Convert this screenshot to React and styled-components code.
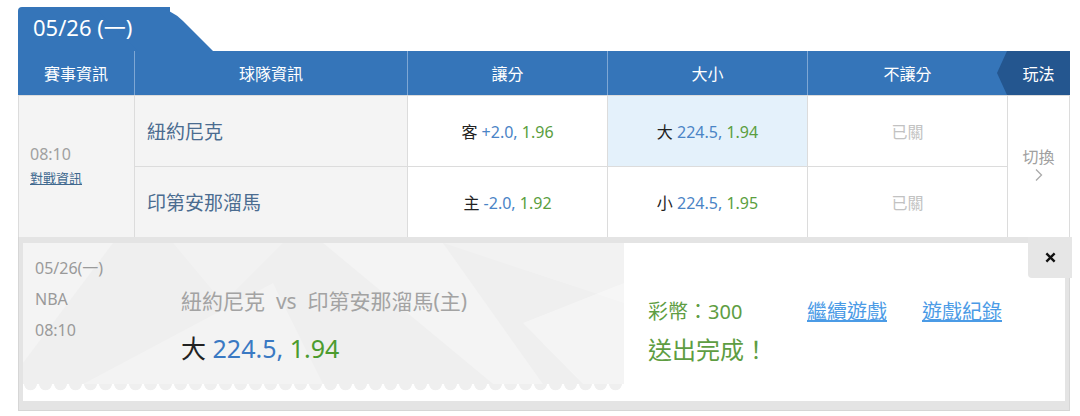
import styled, { createGlobalStyle, css } from "styled-components";

const GlobalStyle = createGlobalStyle`
  body {
    margin: 0;
    background: #fff;
    font-family: "Noto Sans", "Noto Sans CJK TC", sans-serif;
  }
`;

const rows = [
  { team: "紐約尼克", side: "客", spread: "+2.0", spreadOdds: "1.96", ou: "大", total: "224.5", ouOdds: "1.94", picked: true },
  { team: "印第安那溜馬", side: "主", spread: "-2.0", spreadOdds: "1.92", ou: "小", total: "224.5", ouOdds: "1.95" },
];

const App = () => {
  return (
    <>
      <GlobalStyle />
      <Wrap>
        <Tab>
          <TabLabel>05/26 (一)</TabLabel>
        </Tab>
        <HeadRow>
          <HeadCell>賽事資訊</HeadCell>
          <HeadCell>球隊資訊</HeadCell>
          <HeadCell>讓分</HeadCell>
          <HeadCell>大小</HeadCell>
          <HeadCell>不讓分</HeadCell>
          <HeadCell $dark>玩法</HeadCell>
        </HeadRow>

        <Body>
          <InfoCell>
            <Time>08:10</Time>
            <MatchLink>對戰資訊</MatchLink>
          </InfoCell>
          {rows.map((r, i) => (
            <Row key={r.team} $row={i + 1}>
              <TeamCell>{r.team}</TeamCell>
              <OddsCell>
                <span>
                  <Label>{r.side}</Label> <Blue>{r.spread},</Blue> <Green>{r.spreadOdds}</Green>
                </span>
              </OddsCell>
              <OddsCell $picked={r.picked}>
                <span>
                  <Label>{r.ou}</Label> <Blue>{r.total},</Blue> <Green>{r.ouOdds}</Green>
                </span>
              </OddsCell>
              <ClosedCell>已關</ClosedCell>
            </Row>
          ))}
          <SwitchCell>
            <span>切換</span>
            <Chevron viewBox="0 0 10 14">
              <path d="M2 1.5 L7.5 7 L2 12.5" fill="none" stroke="#aaa" strokeWidth="1.3" />
            </Chevron>
          </SwitchCell>
        </Body>

        <Panel>
          <Card>
            <Ticket>
              <Facets viewBox="0 0 601 141" preserveAspectRatio="none">
                <polygon points="0,0 90,0 0,120" fill="#fff" opacity="0.3" />
                <polygon points="60,141 250,40 300,141" fill="#fff" opacity="0.25" />
                <polygon points="300,0 420,0 520,141 470,141" fill="#fff" opacity="0.3" />
                <polygon points="420,0 601,0 601,60" fill="#fff" opacity="0.2" />
                <polygon points="500,80 601,40 601,141 560,141" fill="#fff" opacity="0.35" />
                <polygon points="150,0 260,0 200,60" fill="#fff" opacity="0.2" />
              </Facets>
              <Meta>
                <div>05/26(一)</div>
                <div>NBA</div>
                <div>08:10</div>
              </Meta>
              <Bet>
                <Matchup>紐約尼克&nbsp; vs &nbsp;印第安那溜馬(主)</Matchup>
                <Pick>
                  <Label>大</Label> <BigBlue>224.5,</BigBlue> <BigGreen>1.94</BigGreen>
                </Pick>
              </Bet>
            </Ticket>
            <Result>
              <ResultRow>
                <Coins>彩幣：300</Coins>
                <Links>
                  <TextLink>繼續遊戲</TextLink>
                  <TextLink>遊戲紀錄</TextLink>
                </Links>
              </ResultRow>
              <Done>送出完成！</Done>
            </Result>
          </Card>
          <Close aria-label="close">
            <svg viewBox="0 0 12 12" width="11" height="11">
              <path d="M1.5 1.5 L10.5 10.5 M10.5 1.5 L1.5 10.5" stroke="#111" strokeWidth="2.6" />
            </svg>
          </Close>
        </Panel>
      </Wrap>
    </>
  );
};

export default App;

const blue = "#3575b9";

const Wrap = styled.div`
  width: 1052px;
  margin: 7px 0 0 18px;
`;

const Tab = styled.div`
  position: relative;
  width: 152px;
  height: 44px;
  box-sizing: border-box;
  padding-left: 15px;
  background: ${blue};
  border-top-left-radius: 4px;
  color: #fff;
  font-size: 22px;
  line-height: 40px;
  &::after {
    content: "";
    position: absolute;
    top: 0;
    left: 120px;
    width: 75px;
    height: 100%;
    background: ${blue};
    transform: skewX(45deg);
    transform-origin: bottom left;
    border-top-right-radius: 14px;
  }
`;

const TabLabel = styled.span`
  position: relative;
  z-index: 1;
`;

const HeadRow = styled.div`
  display: grid;
  grid-template-columns: 116px 273px 200px 200px 200px 63px;
  height: 44px;
  background: ${blue};
  color: #fff;
  font-size: 16px;
`;

const HeadCell = styled.div`
  position: relative;
  display: flex;
  align-items: center;
  justify-content: center;
  border-left: 1px solid #7ea7d4;
  &:first-child {
    border-left: none;
  }
  ${(p) =>
    p.$dark &&
    css`
      background: #24568f;
      border-left: none;
      &::before {
        content: "";
        position: absolute;
        left: -10px;
        top: 0;
        border-top: 22px solid transparent;
        border-bottom: 22px solid transparent;
        border-right: 10px solid #24568f;
      }
    `}
`;

const Body = styled.div`
  display: grid;
  grid-template-columns: 115px 272px 199px 199px 199px 61px;
  grid-template-rows: 70px 70px;
  gap: 1px;
  background: #dcdcdc;
  border: 1px solid #dcdcdc;
  border-bottom: none;
`;

const Row = styled.div`
  display: contents;
  & > * {
    grid-row: ${(p) => p.$row};
  }
`;

const InfoCell = styled.div`
  grid-row: 1 / 3;
  grid-column: 1;
  display: flex;
  flex-direction: column;
  justify-content: center;
  padding: 0 0 2px 11px;
  background: #f4f4f4;
`;

const Time = styled.div`
  color: #a0a0a0;
  font-size: 16px;
  line-height: 24px;
`;

const MatchLink = styled.a`
  color: #40698f;
  font-size: 13px;
  line-height: 24px;
  text-decoration: underline;
`;

const TeamCell = styled.div`
  display: flex;
  align-items: center;
  padding-left: 12px;
  background: #f4f4f4;
  color: #4b6c90;
  font-size: 19px;
`;

const OddsCell = styled.div`
  display: flex;
  align-items: center;
  justify-content: center;
  background: ${(p) => (p.$picked ? "#e4f1fb" : "#fff")};
  font-size: 16px;
`;

const Label = styled.span`
  color: #222;
`;

const Blue = styled.span`
  color: #4a84c6;
`;

const Green = styled.span`
  color: #5a9e3e;
`;

const ClosedCell = styled.div`
  display: flex;
  align-items: center;
  justify-content: center;
  background: #fff;
  color: #c2c2c2;
  font-size: 16px;
`;

const SwitchCell = styled.div`
  grid-row: 1 / 3;
  grid-column: 6;
  display: flex;
  flex-direction: column;
  align-items: center;
  justify-content: center;
  background: #fff;
  color: #a0a0a0;
  font-size: 16px;
  line-height: 22px;
  padding-bottom: 6px;
`;

const Chevron = styled.svg`
  width: 10px;
  height: 14px;
`;

const Panel = styled.div`
  position: relative;
  background: #e4e4e4;
  padding: 6px 4px 9px 4px;
  border: 1px solid #d6d6d6;
  border-top: none;
`;

const Card = styled.div`
  display: flex;
  align-items: flex-start;
  height: 158px;
  background: #fff;
`;

const Ticket = styled.div`
  position: relative;
  display: flex;
  width: 601px;
  height: 141px;
  flex-shrink: 0;
  box-sizing: border-box;
  padding: 10px 12px 0;
  background: #efefef;
  &::after {
    content: "";
    position: absolute;
    left: 0;
    right: 0;
    top: 100%;
    height: 7px;
    background: radial-gradient(circle at 50% 0, #efefef 6px, transparent 6.6px) repeat-x;
    background-size: 15px 7px;
  }
`;

const Facets = styled.svg`
  position: absolute;
  inset: 0;
  width: 100%;
  height: 100%;
`;

const Meta = styled.div`
  position: relative;
  width: 146px;
  flex-shrink: 0;
  color: #9a9a9a;
  font-size: 16px;
  line-height: 31px;
`;

const Bet = styled.div`
  position: relative;
  padding-top: 33px;
`;

const Matchup = styled.div`
  color: #a3a3a3;
  font-size: 21px;
  line-height: 31px;
  white-space: nowrap;
`;

const Pick = styled.div`
  margin-top: 13px;
  font-size: 25px;
  line-height: 36px;
  white-space: pre;
`;

const BigBlue = styled.span`
  color: #3a79c3;
`;

const BigGreen = styled.span`
  color: #4c9b2e;
`;

const Result = styled.div`
  flex: 1;
  padding: 52px 0 0 24px;
`;

const ResultRow = styled.div`
  display: flex;
  align-items: center;
  height: 30px;
`;

const Coins = styled.div`
  width: 159px;
  color: #5e9d42;
  font-size: 20px;
`;

const Links = styled.div`
  display: flex;
  gap: 35px;
`;

const TextLink = styled.a`
  color: #4b9be6;
  font-size: 20px;
  text-decoration: underline;
  cursor: pointer;
`;

const Done = styled.div`
  margin-top: 8px;
  color: #5e9d42;
  font-size: 24px;
  line-height: 34px;
`;

const Close = styled.button`
  position: absolute;
  top: 0;
  right: -3px;
  display: flex;
  align-items: center;
  justify-content: center;
  width: 44px;
  height: 41px;
  padding: 0;
  border: none;
  border-bottom-left-radius: 4px;
  background: #e6e6e6;
  cursor: pointer;
`;
